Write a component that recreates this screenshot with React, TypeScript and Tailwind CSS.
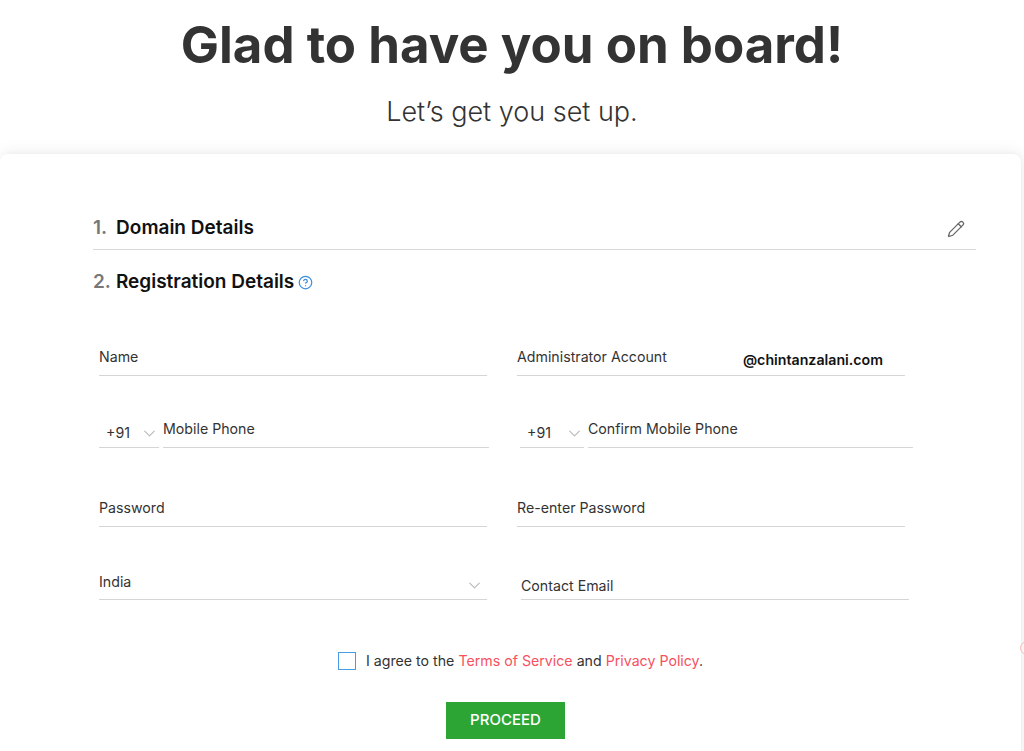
import { ChevronDown, CircleHelp, Pencil } from "lucide-react";

function Field({ label, className, labelClass = "pb-2", children }: { label: string; className: string; labelClass?: string; children?: React.ReactNode }) {
  return (
    <div className={`flex items-end justify-between border-b border-[#d5d5d5] text-[14.2px] leading-5 text-[#333] ${className}`}>
      <span className={labelClass}>{label}</span>
      {children}
    </div>
  );
}

function PhoneRow({ label, codeWidth, lineWidth, className }: { label: string; codeWidth: string; lineWidth: string; className: string }) {
  return (
    <div className={`flex items-end gap-1 text-[14.2px] leading-5 text-[#333] ${className}`}>
      <div className={`flex h-[30px] items-end justify-between border-b border-[#d5d5d5] pl-[7px] ${codeWidth}`}>
        <span className="pb-[4px]">+91</span>
        <ChevronDown className="mb-[4px] h-[19px] w-[19px] text-[#b9b9b9]" strokeWidth={1.4} />
      </div>
      <div className={`h-[30px] border-b border-[#d5d5d5] pt-[1px] ${lineWidth}`}>{label}</div>
    </div>
  );
}

export default function App() {
  return (
    <div className="relative h-[751px] w-[1024px] overflow-hidden bg-white font-['Inter','Liberation_Sans',sans-serif]">
      <h1 className="pt-[10px] text-center text-[51px] leading-[70px] font-bold text-[#333]">Glad to have you on board!</h1>
      <p className="pt-[10px] text-center text-[27px] leading-[44px] font-light text-[#333]">Let’s get you set up.</p>

      <div className="mt-[20px] h-[620px] w-[1021px] rounded-t-lg bg-white pt-[60px] pr-[45px] pl-[93px] shadow-[0_-3px_14px_rgba(0,0,0,0.06),2px_0_6px_rgba(0,0,0,0.04)]">
        {/* DOMAIN */}
        <div className="flex h-[36px] items-start justify-between border-b border-[#d9d9d9] pt-[2px]">
          <h2 className="text-[19px] leading-6 font-semibold text-[#111]">
            <span className="mr-[9px] text-[#777]">1.</span>Domain Details
          </h2>
          <Pencil className="mt-[4px] mr-[11px] h-[18px] w-[18px] text-[#666]" strokeWidth={1.7} />
        </div>
        <h2 className="mt-[20px] flex items-center text-[19px] leading-6 font-semibold text-[#111]">
          <span className="mr-[5px] text-[#777]">2.</span>Registration Details
          <CircleHelp className="ml-[4px] h-[15px] w-[15px] text-[#3b8fe0]" strokeWidth={2} />
        </h2>

        {/* FORM */}
        <div className="mt-[52px] grid w-[821px] grid-cols-[394px_1fr] pl-[6px]">
          <Field label="Name" className="h-[30px] w-[388px]" />
          <Field label="Administrator Account" className="ml-[24px] h-[30px] w-[388px]">
            <span className="pr-[22px] pb-[5px] text-[14.2px] font-semibold text-[#111]">@chintanzalani.com</span>
          </Field>

          <PhoneRow label="Mobile Phone" codeWidth="w-[60px]" lineWidth="w-[326px]" className="mt-[42px]" />
          <PhoneRow label="Confirm Mobile Phone" codeWidth="w-[64px]" lineWidth="w-[325px]" className="mt-[42px] ml-[27px]" />

          <Field label="Password" className="mt-[49px] h-[30px] w-[388px]" />
          <Field label="Re-enter Password" className="mt-[49px] ml-[24px] h-[30px] w-[388px]" />

          <Field label="India" className="mt-[43px] h-[30px] w-[388px]" labelClass="pb-[7px]">
            <ChevronDown className="mr-[3px] mb-[4px] h-[19px] w-[19px] text-[#b9b9b9]" strokeWidth={1.4} />
          </Field>
          <Field label="Contact Email" className="mt-[43px] ml-[28px] h-[30px] w-[388px]" labelClass="pb-[3px]" />
        </div>

        {/* AGREE */}
        <div className="mt-[51px] flex items-center justify-center pr-[28px] text-[14.2px] leading-5 text-[#333]">
          <span className="mr-[10px] h-[18px] w-[18px] border border-[#4a9be6]" />
          <span>
            I agree to the <a className="text-[#f5515f]">Terms of Service</a> and <a className="text-[#f5515f]">Privacy Policy</a>.
          </span>
        </div>
        <div className="mt-[31px] flex justify-center pr-[58px]">
          <button className="h-[37px] w-[119px] bg-[#2ca535] text-[15px] font-medium text-white">PROCEED</button>
        </div>
      </div>

      <span className="absolute top-[641px] left-[1020px] h-[14px] w-[14px] rounded-full border border-[#f8b9b4]" />
    </div>
  );
}
